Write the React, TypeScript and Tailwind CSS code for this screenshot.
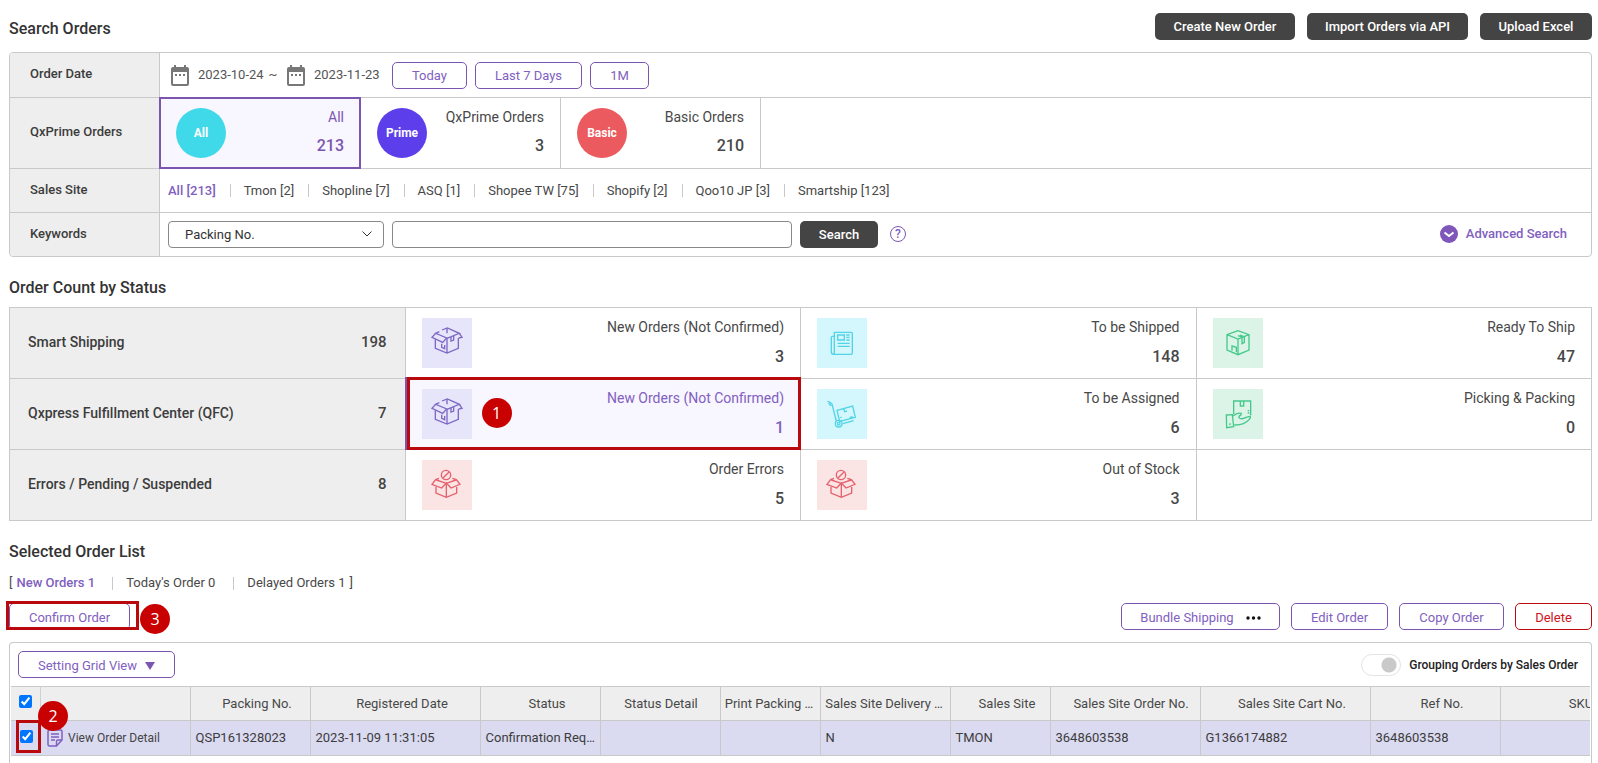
import { useState } from "react";
import type { ReactNode } from "react";
import { clsx } from "clsx";

type Tone = "violet" | "cyan" | "green" | "red";

const TONES: Record<Tone, string> = {
  violet: "bg-[#e7e5fa] text-[#7d68c4]",
  cyan: "bg-[#d3f7fc] text-[#52d3e6]",
  green: "bg-[#dcf4e8] text-[#45c98b]",
  red: "bg-[#fae4e4] text-[#e5616d]",
};

const ICONS: Record<string, ReactNode> = {
  openBox: (
    <>
      <path d="M41 46 30 58 62 73 74 60 41 46 52 41 M60 36 76 30 112 46 75 61" />
      <path d="M112 46 120 58 110 60 M75 30V46 M40 64V91L75 105 109 91V60 M75 61V105" />
      <path d="M87 57V69L95 66V54 M59 77V88L68 92V81" />
    </>
  ),
  paper: (
    <>
      <path d="M52 43H103Q106 43 106 46V105Q106 109 102 109H50Q43 109 43 103V58Q43 55 46 55H50 M52 43V103Q52 109 47 109" />
      <path d="M62 51H82V66H62Z M88 51H98 M88 58H98 M88 66H98 M62 76H98 M62 85H98" />
    </>
  ),
  trolley: (
    <>
      <path d="M31 37Q38 37 45 45L58 96 M35 42 42 51" />
      <path d="M60 64 107 51 115 85 68 97Z M80 59 83 68 90 66 M98 86 107 83 M70 86 74 84" />
      <circle cx="65" cy="104" r="10" />
      <circle cx="65" cy="104" r="4" />
      <path d="M78 104 110 95" />
    </>
  ),
  blockedBox: (
    <>
      <circle cx="72" cy="45" r="14" />
      <path d="M62 55 82 35" />
      <path d="M51 55 41 59 30 73 59 84 73 69 87 84 114 73 103 59 91 55 M43 60 73 70 102 60" />
      <path d="M42 81V99L73 112 104 99V81 M73 70V112" />
    </>
  ),
  closedBox: (
    <>
      <path d="M42 50 75 38 108 50V96L75 110 42 96Z M42 50 75 63 108 50 M75 63V110" />
      <path d="M75 53 87 57V77L94 74V56L81 51 M57 98V84L70 88V103" />
    </>
  ),
  handBox: (
    <>
      <path d="M62 76V36H113V79 M82 36V51H92V36 M104 72H109 M104 65H109" />
      <path d="M40 78 58 77 62 113 41 116Z M51 103V109" />
      <path d="M60 81Q72 70 85 73L83 79Q77 80 78 86Q84 93 99 85L112 82Q114 86 108 92Q94 109 64 108" />
    </>
  ),
};

interface StatusItem {
  label: string;
  count: number;
  icon: string;
  tone: Tone;
  selected?: boolean;
}

interface StatusGroup {
  label: string;
  count: number;
  items: StatusItem[];
}

const STATUS_GROUPS: StatusGroup[] = [
  {
    label: "Smart Shipping",
    count: 198,
    items: [
      { label: "New Orders (Not Confirmed)", count: 3, icon: "openBox", tone: "violet" },
      { label: "To be Shipped", count: 148, icon: "paper", tone: "cyan" },
      { label: "Ready To Ship", count: 47, icon: "closedBox", tone: "green" },
    ],
  },
  {
    label: "Qxpress Fulfillment Center (QFC)",
    count: 7,
    items: [
      { label: "New Orders (Not Confirmed)", count: 1, icon: "openBox", tone: "violet", selected: true },
      { label: "To be Assigned", count: 6, icon: "trolley", tone: "cyan" },
      { label: "Picking & Packing", count: 0, icon: "handBox", tone: "green" },
    ],
  },
  {
    label: "Errors / Pending / Suspended",
    count: 8,
    items: [
      { label: "Order Errors", count: 5, icon: "blockedBox", tone: "red" },
      { label: "Out of Stock", count: 3, icon: "blockedBox", tone: "red" },
    ],
  },
];

const ORDER_TYPES = [
  { badge: "All", label: "All", count: 213, color: "bg-[#40d9ea]", selected: true },
  { badge: "Prime", label: "QxPrime Orders", count: 3, color: "bg-[#5d3eeb]", selected: false },
  { badge: "Basic", label: "Basic Orders", count: 210, color: "bg-[#ea5a5e]", selected: false },
];

const SALES_SITES = [
  "All [213]",
  "Tmon [2]",
  "Shopline [7]",
  "ASQ [1]",
  "Shopee TW [75]",
  "Shopify [2]",
  "Qoo10 JP [3]",
  "Smartship [123]",
];

const COLUMNS = [
  { title: "Packing No.", value: "QSP161328023", width: "w-[120px]", head: "pl-3.5" },
  { title: "Registered Date", value: "2023-11-09 11:31:05", width: "w-[170px]", head: "pl-3.5" },
  { title: "Status", value: "Confirmation Req…", width: "w-[120px]", head: "pl-3.5" },
  { title: "Status Detail", value: "", width: "w-[120px]", head: "pl-0.5" },
  { title: "Print Packing …", value: "", width: "w-[100px]", head: "pr-0.5" },
  { title: "Sales Site Delivery …", value: "N", width: "w-[130px]", head: "pr-0.5" },
  { title: "Sales Site", value: "TMON", width: "w-[100px]", head: "pl-3.5" },
  { title: "Sales Site Order No.", value: "3648603538", width: "w-[150px]", head: "pl-3" },
  { title: "Sales Site Cart No.", value: "G1366174882", width: "w-[170px]", head: "pl-3.5" },
  { title: "Ref No.", value: "3648603538", width: "w-[130px]", head: "pl-3.5" },
  { title: "SKU", value: "", width: "w-[150px]", head: "pl-3" },
];

function DarkButton({ children, className }: { children: ReactNode; className?: string }) {
  return (
    <button type="button" className={clsx("h-[27px] rounded-[5px] bg-[#444] text-[13px] font-medium text-white", className)}>
      {children}
    </button>
  );
}

function OutlineButton({ children, className }: { children: ReactNode; className?: string }) {
  return (
    <button
      type="button"
      className={clsx(
        "flex h-[27px] items-center justify-center rounded-[5px] border bg-white pt-0.5 text-[13px]",
        className,
      )}
    >
      {children}
    </button>
  );
}

// Numbered step marker that floats above the page
function Step({ n, className }: { n: number; className: string }) {
  return (
    <span
      className={clsx(
        "absolute z-20 flex size-[30px] items-center justify-center rounded-full bg-[#c80000] font-['Open_Sans',sans-serif] text-base leading-none text-white",
        className,
      )}
    >
      {n}
    </span>
  );
}

function Calendar() {
  return (
    <svg viewBox="0 0 18 21" className="h-[21px] w-[18px]" aria-hidden="true">
      <path fill="#777" fillRule="evenodd" d="M3 0h2v2h8V0h2v2h1a2 2 0 0 1 2 2v15a2 2 0 0 1-2 2H2a2 2 0 0 1-2-2V4a2 2 0 0 1 2-2h1zM2 7v12h14V7z" />
      <path fill="#777" d="M4 9h2v2H4zM8 9h2v2H8zM12 9h2v2h-2z" />
    </svg>
  );
}

function Row({ id, label, className, children }: { id?: string; label: string; className: string; children: ReactNode }) {
  return (
    <div className={clsx("flex border-b border-[#c9c9c9] last:border-b-0", className)}>
      <div className="flex w-[150px] shrink-0 items-center border-r border-[#c9c9c9] bg-[#eee] pb-0.5 pl-5 font-medium text-[#3c3c3c]">
        {id ? <label htmlFor={id}>{label}</label> : label}
      </div>
      <div className="flex min-w-0 flex-1 items-center">{children}</div>
    </div>
  );
}

function SearchPanel() {
  return (
    <section>
      <header className="flex h-[27px] items-center justify-between">
        <h2 className="pt-1 text-base font-medium text-[#333]">Search Orders</h2>
        <div className="flex gap-3">
          <DarkButton className="w-[140px]">Create New Order</DarkButton>
          <DarkButton className="w-[161px]">Import Orders via API</DarkButton>
          <DarkButton className="w-28">Upload Excel</DarkButton>
        </div>
      </header>

      <div className="mt-3 overflow-hidden rounded border border-[#c9c9c9]">
        <Row label="Order Date" className="h-[45px]">
          <div className="flex items-center pl-[11px] whitespace-nowrap text-[#555]">
            <Calendar />
            <time className="ml-[9px] w-[67px]">2023-10-24</time>
            <span className="mr-2 ml-0.5 w-3 text-center">~</span>
            <Calendar />
            <time className="ml-[9px] w-[70px]">2023-11-23</time>
            <div className="ml-2 flex gap-2">
              <OutlineButton className="w-[75px] border-[#7b55b0] text-[#8160c0]">Today</OutlineButton>
              <OutlineButton className="w-[107px] border-[#7b55b0] text-[#8160c0]">Last 7 Days</OutlineButton>
              <OutlineButton className="w-[59px] border-[#7b55b0] text-[#8160c0]">1M</OutlineButton>
            </div>
          </div>
        </Row>

        <Row label="QxPrime Orders" className="h-[71px]">
          {ORDER_TYPES.map((type) => (
            <button
              type="button"
              key={type.badge}
              className={clsx(
                "flex items-start justify-between text-right",
                type.selected
                  ? "relative -my-px -ml-px h-[72px] w-[202px] border-2 border-[#7b55b0] bg-[#f8f6ff] px-[15px] pt-[9px] text-[#7b55b0]"
                  : "h-[70px] w-[200px] border-r border-[#c9c9c9] px-4 pt-2.5",
              )}
            >
              <span className={clsx("flex size-[50px] items-center justify-center rounded-full text-xs font-bold text-white", type.color)}>
                {type.badge}
              </span>
              <span className="flex flex-col gap-2.5 text-sm leading-[18px]">
                {type.label}
                <b className="text-base leading-5 font-medium">{type.count}</b>
              </span>
            </button>
          ))}
        </Row>

        <Row label="Sales Site" className="h-11">
          <ul className="flex items-center pl-2">
            {SALES_SITES.map((site, i) => (
              <li key={site} className="flex items-center">
                {i > 0 && <span className="mr-[13px] ml-3.5 h-[13px] w-px bg-[#c9c9c9]" />}
                <a href="#" className={i === 0 ? "font-medium text-[#8160c0]" : ""}>{site}</a>
              </li>
            ))}
          </ul>
        </Row>

        <Row id="keyword" label="Keywords" className="h-[43px]">
          <div className="flex flex-1 items-center gap-2 pl-2">
            <div className="relative">
              <select
                aria-label="Keyword type"
                className="block h-[27px] w-[216px] appearance-none rounded border border-[#888] bg-white pl-4 text-[13px] text-[#333]"
              >
                <option>Packing No.</option>
              </select>
              <svg viewBox="0 0 10 6" className="pointer-events-none absolute top-2.5 right-3 h-1.5 w-2.5" fill="none" stroke="#333" aria-hidden="true">
                <path d="m.5.5 4.500 4.500 4.500-4.500" />
              </svg>
            </div>
            <input id="keyword" type="text" className="h-[27px] w-[400px] rounded border border-[#888] px-2 outline-none" />
            <DarkButton className="w-[78px]">Search</DarkButton>
            <button
              type="button"
              aria-label="Help"
              className="mb-0.5 ml-1 flex size-4 items-center justify-center rounded-full border border-[#7b55b0] text-xs leading-none font-medium text-[#8160c0]"
            >
              ?
            </button>
            <button type="button" className="mr-6 mb-0.5 ml-auto flex items-center gap-2 font-medium text-[#8160c0]">
              <svg viewBox="0 0 18 18" className="size-[18px]" aria-hidden="true">
                <circle cx="9" cy="9" r="9" fill="#7f56b9" />
                <path d="m4.500 7.500 4.500 3.500 4.500-3.500" fill="none" stroke="#fff" strokeWidth="2" />
              </svg>
              Advanced Search
            </button>
          </div>
        </Row>
      </div>
    </section>
  );
}

function StatusCell({ item }: { item?: StatusItem }) {
  if (!item) return <div className="border-r border-b border-[#c9c9c9]" />;

  return (
    <button
      type="button"
      className={clsx(
        "relative flex h-[71px] items-start justify-between border-r border-b border-[#c9c9c9] px-4 pt-2.5 text-right",
        item.selected && "bg-[#f8f6ff] text-[#8160c0]",
      )}
    >
      <span className={clsx("size-[50px]", TONES[item.tone])}>
        <svg viewBox="0 0 150 150" fill="none" stroke="currentColor" strokeWidth="4" className="size-full" aria-hidden="true">
          {ICONS[item.icon]}
        </svg>
      </span>
      <span className="flex flex-col gap-[11px] text-sm leading-[18px]">
        {item.label}
        <b className="text-base leading-5 font-medium">{item.count}</b>
      </span>
      {item.selected && (
        <>
          <span className="absolute -top-0.5 -bottom-px -left-px w-0.5 bg-[#7b55b0]" />
          <span className="absolute -top-0.5 -right-px -bottom-px left-px z-10 border-3 border-[#b9090d]" />
          <Step n={1} className="top-[19px] left-[76px]" />
        </>
      )}
    </button>
  );
}

function StatusPanel() {
  return (
    <section className="mt-[19px]">
      <h2 className="text-base font-medium text-[#333]">Order Count by Status</h2>
      <div className="mt-[7px] border-t border-l border-[#c9c9c9]">
        {STATUS_GROUPS.map((group) => (
          <div key={group.label} className="grid h-[71px] grid-cols-4">
            <div className="flex items-center justify-between border-r border-b border-[#c9c9c9] bg-[#eee] px-[18px] text-sm font-medium text-[#3c3c3c]">
              <span className="pb-0.5">{group.label}</span>
              <b className="text-[15px] font-medium text-[#444]">{group.count}</b>
            </div>
            {[0, 1, 2].map((i) => (
              <StatusCell key={i} item={group.items[i]} />
            ))}
          </div>
        ))}
      </div>
    </section>
  );
}

function OrderTable() {
  const [checked, setChecked] = useState(true);

  return (
    <div className="mx-px overflow-x-clip">
      <table className="w-[1639px] table-fixed border-collapse text-[13px]">
        <thead>
          <tr className="h-[34px] border-y border-[#c9c9c9] bg-[#eee]">
            <th className="w-[29px] border-r border-[#d0d0d0] pb-1">
              <input
                type="checkbox"
                aria-label="Select all orders"
                checked={checked}
                onChange={(e) => setChecked(e.target.checked)}
                className="mx-auto block size-[13px]"
              />
            </th>
            <th className="w-[150px] border-r border-[#c9c9c9]" aria-label="Detail" />
            {COLUMNS.map((col) => (
              <th
                key={col.title}
                className={clsx("overflow-hidden border-r border-[#c9c9c9] font-normal whitespace-nowrap", col.width, col.head)}
              >
                {col.title}
              </th>
            ))}
          </tr>
        </thead>
        <tbody>
          <tr className="h-[35px] border-b border-[#c9c9c9] bg-[#dadaf1] text-[#3c3c3c]">
            <td className="relative pb-1 pl-0.5">
              <input
                type="checkbox"
                aria-label="Select order QSP161328023"
                checked={checked}
                onChange={(e) => setChecked(e.target.checked)}
                className="mx-auto block size-[13px]"
              />
              <span className="pointer-events-none absolute -top-px left-[5px] h-[33px] w-[25px] border-3 border-[#b9090d]" />
              <Step n={2} className="-top-5 left-[27px]" />
            </td>
            <td className="border-r border-[#c9c9c9] pl-[7px]">
              <a href="#" className="flex items-center gap-[5px] text-xs text-[#444]">
                <svg viewBox="0 0 16 18" className="h-[18px] w-4" fill="none" stroke="#8160c0" strokeWidth="1.500" aria-hidden="true">
                  <path d="M15 11V2.500Q15 1 13.500 1H2.500Q1 1 1 2.500v13Q1 17 2.500 17H9.500zM15 11H11Q9.500 11 9.500 12.500V17M4 5h8M4 8h8M4 11h4" />
                </svg>
                View Order Detail
              </a>
            </td>
            {COLUMNS.map((col) => (
              <td key={col.title} className="overflow-hidden border-r border-[#c9c9c9] pl-[5px] whitespace-nowrap">
                {col.value}
              </td>
            ))}
          </tr>
        </tbody>
      </table>
    </div>
  );
}

function OrderList() {
  return (
    <section className="mt-[19px]">
      <h2 className="text-base font-medium text-[#333]">Selected Order List</h2>

      <div className="mt-[9px] flex h-5 items-center">
        [<a href="#" className="ml-1 font-medium text-[#8160c0]">New Orders 1</a>
        <span className="mr-[13px] ml-[17px] h-[13px] w-px bg-[#c9c9c9]" />
        <a href="#">Today&apos;s Order 0</a>
        <span className="mr-[13px] ml-[18px] h-[13px] w-px bg-[#c9c9c9]" />
        <a href="#" className="mr-1">Delayed Orders 1</a>]
      </div>

      <div className="mt-2.5 flex items-center justify-between">
        <div className="relative">
          <OutlineButton className="w-[121px] border-[#7b55b0] text-[#8160c0]">Confirm Order</OutlineButton>
          <span className="pointer-events-none absolute -top-0.5 bottom-0 -left-[3px] w-[133px] border-3 border-[#b9090d]" />
          <Step n={3} className="top-px left-[131px]" />
        </div>
        <div className="flex gap-[11px]">
          <OutlineButton className="w-[159px] gap-3 border-[#7b55b0] text-[#8160c0]">
            Bundle Shipping
            <svg viewBox="0 0 15 4" className="h-1 w-[15px]" fill="#111" aria-hidden="true">
              <circle cx="2" cy="2" r="1.700" />
              <circle cx="7.500" cy="2" r="1.700" />
              <circle cx="13" cy="2" r="1.700" />
            </svg>
          </OutlineButton>
          <OutlineButton className="w-[97px] border-[#7b55b0] text-[#8160c0]">Edit Order</OutlineButton>
          <OutlineButton className="w-[105px] border-[#7b55b0] text-[#8160c0]">Copy Order</OutlineButton>
          <OutlineButton className="w-[77px] border-[#b9090d] text-[#d01418]">Delete</OutlineButton>
        </div>
      </div>

      <div className="mt-3 rounded-t border border-b-0 border-[#c9c9c9] pb-8">
        <div className="flex h-[43px] items-center justify-between pr-[13px] pl-2">
          <OutlineButton className="w-[157px] gap-2 border-[#7b55b0] text-[#8160c0]">
            Setting Grid View
            <svg viewBox="0 0 10 8" className="h-2 w-2.5" fill="#7b55b0" aria-hidden="true">
              <path d="M0 0h10L5 8z" />
            </svg>
          </OutlineButton>
          <label className="flex items-center gap-2 text-xs font-medium text-[#222]">
            <input
              type="checkbox"
              role="switch"
              className="h-[22px] w-10 appearance-none rounded-full border border-[#e4e4e4] bg-white bg-[radial-gradient(circle_at_27px_10px,#c9c9c9_7px,transparent_8px)]"
            />
            Grouping Orders by Sales Order
          </label>
        </div>
        <OrderTable />
      </div>
    </section>
  );
}

export default function App() {
  return (
    <main className="h-screen overflow-hidden bg-white pt-[13px] pr-1.5 pl-[9px] font-[Roboto,'Liberation_Sans',sans-serif] text-[13px] leading-5 text-[#484848]">
      <SearchPanel />
      <StatusPanel />
      <OrderList />
    </main>
  );
}
